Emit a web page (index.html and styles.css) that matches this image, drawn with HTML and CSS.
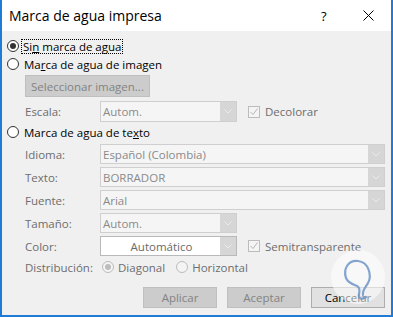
FILE: index.html
```html
<!DOCTYPE html>
<html lang="es">
<head>
    <meta charset="UTF-8">
    <title>Marca de agua impresa</title>
    <link rel="stylesheet" href="styles.css">
</head>
<body>
    <div class="dialog">
        <div class="titlebar">
            <span class="title">Marca de agua impresa</span>
            <span class="help">?</span>
            <span class="close">
                <svg width="11" height="11" viewBox="0 0 11 11"><path d="M0.5 0.5 L10.5 10.5 M10.5 0.5 L0.5 10.5" stroke="#000" stroke-width="1"/></svg>
            </span>
        </div>

        <div class="content">
            <div class="radio-row first">
                <span class="radio checked"></span>
                <span class="focus">Si<u>n</u> marca de agua</span>
            </div>
            <div class="radio-row">
                <span class="radio"></span>
                <span class="txt">Ma<u>r</u>ca de agua de imagen</span>
            </div>

            <div class="indent btn-row">
                <span class="btn off wide">Seleccionar imagen...</span>
            </div>

            <div class="indent field-row escala">
                <span class="lbl">Escala:</span>
                <div class="select short">
                    <span class="val">Autom.</span>
                    <span class="arrow"><svg width="8" height="5" viewBox="0 0 8 5"><path d="M0.5 0.5 L4 4 L7.5 0.5" fill="none" stroke="#ececec"/></svg></span>
                </div>
                <span class="check"><svg width="10" height="10" viewBox="0 0 10 10"><path d="M1.5 5 L4 7.5 L8.5 1.5" fill="none" stroke="#b5b5b5"/></svg></span>
                <span class="dim">Decolorar</span>
            </div>

            <div class="radio-row texto">
                <span class="radio"></span>
                <span class="txt">Marca de agua de te<u>x</u>to</span>
            </div>

            <div class="indent field-row">
                <span class="lbl">Idioma:</span>
                <div class="select full">
                    <span class="val">Español (Colombia)</span>
                    <span class="arrow"><svg width="8" height="5" viewBox="0 0 8 5"><path d="M0.5 0.5 L4 4 L7.5 0.5" fill="none" stroke="#ececec"/></svg></span>
                </div>
            </div>
            <div class="indent field-row">
                <span class="lbl">Texto:</span>
                <div class="select full">
                    <span class="val">BORRADOR</span>
                    <span class="arrow"><svg width="8" height="5" viewBox="0 0 8 5"><path d="M0.5 0.5 L4 4 L7.5 0.5" fill="none" stroke="#ececec"/></svg></span>
                </div>
            </div>
            <div class="indent field-row">
                <span class="lbl">Fuente:</span>
                <div class="select full">
                    <span class="val">Arial</span>
                    <span class="arrow"><svg width="8" height="5" viewBox="0 0 8 5"><path d="M0.5 0.5 L4 4 L7.5 0.5" fill="none" stroke="#ececec"/></svg></span>
                </div>
            </div>
            <div class="indent field-row">
                <span class="lbl">Tamaño:</span>
                <div class="select short">
                    <span class="val">Autom.</span>
                    <span class="arrow"><svg width="8" height="5" viewBox="0 0 8 5"><path d="M0.5 0.5 L4 4 L7.5 0.5" fill="none" stroke="#ececec"/></svg></span>
                </div>
            </div>
            <div class="indent field-row">
                <span class="lbl">Color:</span>
                <div class="select short white">
                    <span class="val center">Automático</span>
                    <span class="arrow"><svg width="8" height="5" viewBox="0 0 8 5"><path d="M0.5 0.5 L4 4 L7.5 0.5" fill="none" stroke="#ececec"/></svg></span>
                </div>
                <span class="check"><svg width="10" height="10" viewBox="0 0 10 10"><path d="M1.5 5 L4 7.5 L8.5 1.5" fill="none" stroke="#b5b5b5"/></svg></span>
                <span class="dim">Semitransparente</span>
            </div>

            <div class="indent dist-row">
                <span class="lbl">Distribución:</span>
                <span class="radio off checked"></span>
                <span class="dim">Diagonal</span>
                <span class="radio off horiz"></span>
                <span class="dim">Horizontal</span>
            </div>

            <div class="actions">
                <span class="btn off">Aplicar</span>
                <span class="btn off">Aceptar</span>
                <span class="btn on">Cancelar</span>
            </div>
        </div>

        <!-- site watermark in the corner -->
        <svg class="mark" width="60" height="62" viewBox="0 0 60 62">
            <circle cx="28" cy="29" r="27" fill="rgba(255,255,255,0.55)"/>
            <path d="M33 47 C 32 42, 36 39, 38 35 C 42 28, 39 14, 28 13 C 18 12, 13 21, 16 30 C 18 35, 24 37, 27 38 C 29 39, 30 42, 29 46 C 28 51, 32 52, 36 49" fill="none" stroke="#6f95c8" stroke-width="2.2" stroke-linecap="round" opacity="0.85"/>
        </svg>
    </div>
</body>
</html>
```

FILE: styles.css
```css
body {
    margin: 0;
    font-family: "Open Sans", sans-serif;
    font-size: 11.5px;
    color: #000;
}
.dialog {
    position: relative;
    width: 393px;
    height: 317px;
    box-sizing: border-box;
    background-color: #f0f0f0;
    border-left: 2px solid #1f7bd6;
    border-right: 2px solid #1f7bd6;
    border-bottom: 2px solid #1f7bd6;
    overflow: hidden;
}
.titlebar {
    height: 31px;
    background-color: #fff;
    display: flex;
    align-items: center;
    padding-left: 7px;
    font-size: 14px;
}
.title {
    flex: 1;
}
.help {
    width: 42px;
    font-size: 13px;
}
.close {
    width: 28px;
    display: flex;
    align-items: center;
}
.content {
    padding: 6px 6px 0 5px;
}
.radio-row {
    display: flex;
    align-items: center;
    height: 18px;
}
.radio-row .txt {
    margin-left: 5px;
}
.radio-row.texto {
    margin-top: 1px;
}
.focus {
    margin-left: 3px;
    padding: 0 1px;
    line-height: 13px;
    outline: 1px dotted #000;
}
.radio {
    width: 12px;
    height: 12px;
    box-sizing: border-box;
    border: 1px solid #333;
    border-radius: 50%;
    background-color: #fff;
    display: flex;
    align-items: center;
    justify-content: center;
    flex: none;
}
.radio.checked::after {
    content: "";
    width: 6px;
    height: 6px;
    border-radius: 50%;
    background-color: #333;
}
.radio.off {
    border-color: #bcbcbc;
    background-color: #f4f4f4;
}
.radio.off.checked::after {
    background-color: #bcbcbc;
}
.indent {
    padding-left: 18px;
}
.btn-row {
    margin-top: 2px;
    display: flex;
}
.btn {
    box-sizing: border-box;
    height: 21px;
    width: 74px;
    display: flex;
    align-items: center;
    justify-content: center;
    border: 1px solid #bfbfbf;
}
.btn.wide {
    width: 125px;
    height: 22px;
}
.btn.off {
    background-color: #cccccc;
    color: #838383;
}
.btn.on {
    background-color: #e1e1e1;
    border-color: #adadad;
    color: #000;
}
.field-row {
    display: flex;
    align-items: center;
    margin-top: 3px;
}
.field-row.escala {
    margin-top: 4px;
}
.lbl {
    width: 75px;
    flex: none;
    color: #6d6d6d;
}
.dim {
    color: #6d6d6d;
}
.select {
    box-sizing: border-box;
    height: 20px;
    display: flex;
    border: 1px solid #cfcfcf;
    background-color: #f5f5f5;
    color: #8a8a8a;
}
.escala .select {
    height: 21px;
}
.select.short {
    width: 137px;
}
.select.full {
    width: 285px;
}
.select.white {
    background-color: #fff;
    border-color: #b9b9b9;
    color: #6a6a6a;
}
.val {
    flex: 1;
    display: flex;
    align-items: center;
    padding-left: 2px;
}
.val.center {
    justify-content: center;
}
.arrow {
    width: 16px;
    flex: none;
    background-color: #d6d6d6;
    display: flex;
    align-items: center;
    justify-content: center;
}
.check {
    width: 12px;
    height: 12px;
    box-sizing: border-box;
    border: 1px solid #bcbcbc;
    background-color: #f4f4f4;
    margin-left: 11px;
    margin-right: 5px;
    display: flex;
    align-items: center;
    justify-content: center;
}
.dist-row {
    display: flex;
    align-items: center;
    height: 18px;
    margin-top: 2px;
}
.dist-row .lbl {
    width: 77px;
}
.dist-row .radio + .dim {
    margin-left: 4px;
}
.radio.horiz {
    margin-left: 11px;
}
.actions {
    display: flex;
    justify-content: flex-end;
    gap: 10px;
    margin-top: 11px;
}
.mark {
    position: absolute;
    left: 328px;
    top: 248px;
}
```
